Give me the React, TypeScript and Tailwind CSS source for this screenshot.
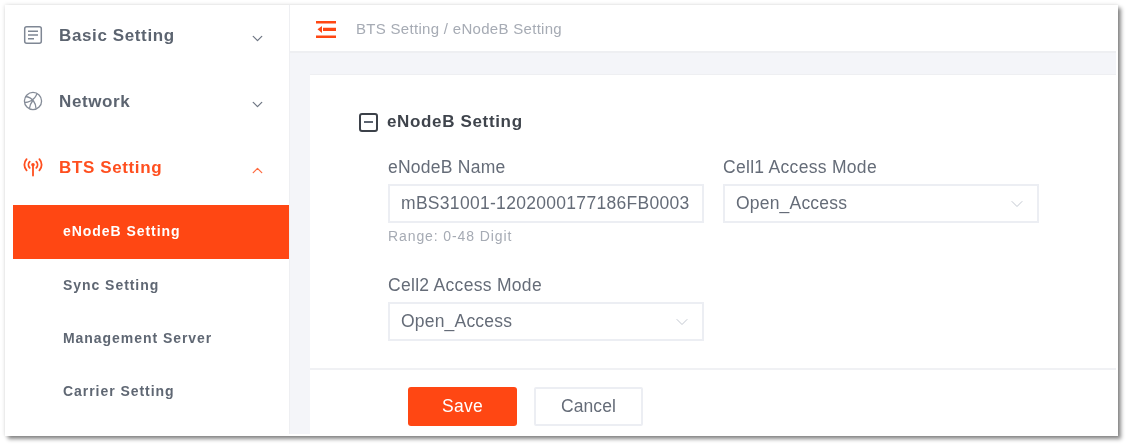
import { ChevronDown, ChevronUp } from 'lucide-react';

const font = "font-['Liberation_Sans',Arial,sans-serif]";

function BasicIcon() {
  return (
    <svg width="20" height="20" viewBox="0 0 20 20" fill="none" stroke="#7f8794" strokeWidth="1.5">
      <rect x="1.700" y="1.700" width="16.600" height="16.600" rx="2" />
      <path d="M5 6.300h10M5 10h10M5 13.700h6" />
    </svg>
  );
}

function NetworkIcon() {
  return (
    <svg width="20" height="20" viewBox="0 0 20 20" fill="none" stroke="#858c98" strokeWidth="1.300">
      <circle cx="10" cy="10" r="8.600" />
      <path d="M2.500 5.500c3 .3 6 1.800 8 4.500 1.500 2 2.500 4.800 2.500 7.500M14 2.500c-1 3-3.500 6-6.500 7.500-2 1-4 1.600-5.800 1.500M9.500 10c-1.500 2-2.800 4.500-3 7.200" />
    </svg>
  );
}

function AntennaIcon() {
  return (
    <svg width="20" height="20" viewBox="0 0 20 20" fill="none" stroke="#ff4f1f" strokeWidth="1.800" strokeLinecap="round">
      <circle cx="10" cy="7.800" r="1.800" fill="#ff4f1f" stroke="none" />
      <path d="M10 9v9.500" />
      <path d="M6.700 4.700a4.500 4.500 0 0 0 0 6.200M13.300 4.700a4.500 4.500 0 0 1 0 6.200" />
      <path d="M3.600 2.200a8.200 8.200 0 0 0 0 11.200M16.400 2.200a8.200 8.200 0 0 1 0 11.200" />
    </svg>
  );
}

function CollapseIcon() {
  return (
    <svg width="20" height="17" viewBox="0 0 20 17" fill="none">
      <path d="M0 0h20v2.600H0zM0 14.400h20V17H0zM7 6.700h13v3.200H7z" fill="#ff4713" />
      <path d="M6 5v7L1.500 8.300z" fill="#ff4713" />
    </svg>
  );
}

function MenuItem({ icon, label, open }: { icon: React.ReactNode; label: string; open?: boolean }) {
  return (
    <div className="h-[60px] flex items-center pl-[18px] pr-[23px]">
      <span className="w-[20px] flex justify-center">{icon}</span>
      <span className={`ml-[16px] flex-1 pt-[2px] text-[17px] font-bold tracking-[0.62px] ${open ? 'text-[#ff4f1f]' : 'text-[#5c6470]'}`}>{label}</span>
      <span className="mt-[6px]">
        {open
          ? <ChevronUp size={17} color="#ff6a40" strokeWidth={1.8} />
          : <ChevronDown size={17} color="#6f7784" strokeWidth={1.8} />}
      </span>
    </div>
  );
}

function SubItem({ label, active }: { label: string; active?: boolean }) {
  return (
    <div className={`h-[53px] flex items-center pl-[50px] text-[14px] font-bold tracking-[0.95px] ${active ? 'bg-[#ff4713] text-white h-[54px] pb-[2px]' : 'text-[#5f6773]'}`}>
      {label}
    </div>
  );
}

function Select({ value }: { value: string }) {
  return (
    <div className="w-[316px] h-[39px] border-2 border-[#eceef3] flex items-center pl-[11px] pr-[10px] text-[17.500px] tracking-[0.2px] text-[#656c78]">
      <span className="flex-1">{value}</span>
      <ChevronDown size={20} color="#c3c8d1" strokeWidth={1.2} />
    </div>
  );
}

export default function App() {
  return (
    <div className={`${font} w-[1127px] h-[446px] bg-white pl-[5px] pt-[5px] overflow-hidden`}>
      <div className="w-[1113px] h-[431px] bg-white flex pr-[2px] pb-[2px] shadow-[3px_3px_4px_rgba(0,0,0,0.45),0_0_4px_rgba(0,0,0,0.15)] blur-[0.5px]">
        {/* sidebar */}
        <div className="w-[285px] shrink-0 pl-[8px] border-r border-[#eeeff2]">
          <div className="-ml-[8px] flex flex-col gap-[6px]">
            <MenuItem icon={<BasicIcon />} label="Basic Setting" />
            <MenuItem icon={<NetworkIcon />} label="Network" />
            <MenuItem icon={<AntennaIcon />} label="BTS Setting" open />
          </div>
          <div className="mt-[8px]">
            <SubItem label="eNodeB Setting" active />
            <SubItem label="Sync Setting" />
            <SubItem label="Management Server" />
            <SubItem label="Carrier Setting" />
          </div>
        </div>

        {/* main */}
        <div className="flex-1 flex flex-col min-w-0">
          <div className="h-[48px] shrink-0 border-b-2 border-[#eeeff2] flex items-center pl-[26px] pt-[2px]">
            <CollapseIcon />
            <span className="ml-[20px] text-[15px] tracking-[0.3px] text-[#a6abb4]">BTS Setting / eNodeB Setting</span>
          </div>
          <div className="flex-1 bg-[#f4f5f9] pl-[20px] pt-[21px] flex flex-col min-h-0">
            <div className="flex-1 bg-white border-t border-[#eeeff2] flex flex-col">
              <div className="h-[293px] shrink-0 pl-[49px] pt-[36px]">
                <div className="flex items-center h-[22px]">
                  <span className="w-[19px] h-[19px] border-2 border-[#3c4149] rounded-[3px] flex items-center justify-center">
                    <span className="w-[9px] h-[2px] bg-[#5c6470]" />
                  </span>
                  <span className="ml-[9px] text-[17px] font-bold tracking-[0.65px] text-[#3f444c]">eNodeB Setting</span>
                </div>
                <div className="pl-[29px] mt-[23px] grid grid-cols-[316px_316px] gap-x-[19px]">
                  <div>
                    <div className="h-[22px] leading-[22px] text-[17.500px] tracking-[0.25px] text-[#656c78]">eNodeB Name</div>
                    <div className="mt-[6px] w-[316px] h-[39px] border-2 border-[#eceef3] flex items-center pl-[11px] text-[17.500px] tracking-[0.3px] text-[#656c78] whitespace-nowrap">
                      mBS31001-1202000177186FB0003
                    </div>
                    <div className="mt-[5px] text-[14px] tracking-[0.9px] text-[#a6abb4] leading-[16px]">Range: 0-48 Digit</div>
                  </div>
                  <div>
                    <div className="h-[22px] leading-[22px] text-[17.500px] tracking-[0.3px] text-[#656c78]">Cell1 Access Mode</div>
                    <div className="mt-[6px]"><Select value="Open_Access" /></div>
                  </div>
                  <div className="mt-[30px]">
                    <div className="h-[22px] leading-[22px] text-[17.500px] tracking-[0.3px] text-[#656c78]">Cell2 Access Mode</div>
                    <div className="mt-[6px]"><Select value="Open_Access" /></div>
                  </div>
                </div>
              </div>
              <div className="flex-1 border-t-2 border-[#f0f1f4] pl-[98px] pt-[17px] flex items-start gap-[17px]">
                <button className="w-[109px] h-[39px] rounded-[3px] bg-[#ff4713] text-white text-[17.500px] tracking-[0.3px]">Save</button>
                <button className="w-[109px] h-[39px] rounded-[2px] border-2 border-[#eceef3] text-[#656c78] text-[17.500px] tracking-[0.1px]">Cancel</button>
              </div>
            </div>
          </div>
        </div>
      </div>
    </div>
  );
}
